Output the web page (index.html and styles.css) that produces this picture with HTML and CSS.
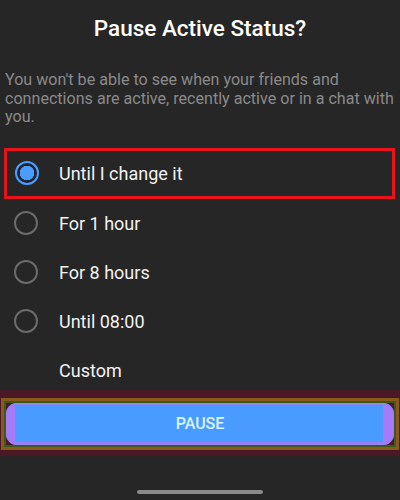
FILE: index.html
```html
<!DOCTYPE html>
<html lang="en">
<head>
    <meta charset="UTF-8">
    <meta name="viewport" content="width=device-width, initial-scale=1.0">
    <title>Pause Active Status?</title>
    <link rel="stylesheet" href="styles.css">
</head>
<body>
    <div class="sheet">
        <h1 class="title">Pause Active Status?</h1>
        <p class="desc">You won't be able to see when your friends and connections are active, recently active or in a chat with you.</p>
        <div class="options">
            <div class="option selected highlight">
                <span class="radio"></span>
                <span class="label">Until I change it</span>
            </div>
            <div class="option">
                <span class="radio"></span>
                <span class="label">For 1 hour</span>
            </div>
            <div class="option">
                <span class="radio"></span>
                <span class="label">For 8 hours</span>
            </div>
            <div class="option">
                <span class="radio"></span>
                <span class="label">Until 08:00</span>
            </div>
            <div class="option last">
                <span class="radio none"></span>
                <span class="label">Custom</span>
            </div>
        </div>
        <div class="action-band">
            <div class="outline-orange">
                <div class="outline-green">
                    <button class="pause-button">PAUSE</button>
                </div>
            </div>
        </div>
        <div class="home-area">
            <div class="home-bar"></div>
        </div>
    </div>
</body>
</html>
```

FILE: styles.css
```css
body {
    font-family: Roboto, "Liberation Sans", sans-serif;
    margin: 0;
    padding: 0;
    background-color: #262626;
}
.sheet {
    width: 400px;
    height: 500px;
    display: flex;
    flex-direction: column;
    overflow: hidden;
}
.title {
    margin: 0;
    padding-top: 14px;
    font-size: 22.5px;
    font-weight: 500;
    line-height: 28px;
    color: #fff;
    text-align: center;
}
.desc {
    margin: 29px 0 0;
    padding: 0 5px;
    font-size: 16.1px;
    line-height: 18.5px;
    color: #8a8a8a;
}
.options {
    margin: 21px 4px 0;
    display: flex;
    flex-direction: column;
}
.option {
    height: 49px;
    display: flex;
    align-items: center;
    box-sizing: border-box;
}
.option.highlight {
    height: 51px;
    border: 3px solid #e8121c;
    margin: 0 1px 0 0;
}
.option.last {
    height: 44px;
    align-items: flex-start;
    padding-top: 14px;
}
.option.highlight .radio {
    margin-left: 8px;
}
.radio {
    width: 24px;
    height: 24px;
    box-sizing: border-box;
    border: 2px solid #6b6b6b;
    border-radius: 50%;
    margin-left: 10px;
    flex-shrink: 0;
}
.radio.none {
    border-color: transparent;
}
.selected .radio {
    border-color: #4a9dff;
    background: radial-gradient(circle, #4a9dff 0 7px, #1f2530 7.5px);
}
.label {
    margin-left: 21px;
    font-size: 18px;
    color: #f2f2f2;
}
.option.highlight .label {
    margin-left: 20px;
}
.action-band {
    background-color: #4a1925;
    padding: 8px 1px 6px;
}
.outline-orange {
    border: 3px solid #8a5a1c;
}
.outline-green {
    border: 2px solid #3b5a1d;
}
.pause-button {
    display: block;
    width: 100%;
    height: 42px;
    border: none;
    border-radius: 11px;
    background: linear-gradient(to right, #a67af8 0 9px, #4a9bff 9px calc(100% - 11px), #a67af8 calc(100% - 11px));
    box-shadow: inset 0 2px 0 #8f86f5, inset 0 -3px 0 #9b7ff4;
    color: #d9f3ff;
    font-family: Roboto, "Liberation Sans", sans-serif;
    font-size: 16px;
    font-weight: 500;
    cursor: pointer;
}
.home-area {
    flex: 1;
    display: flex;
    justify-content: center;
    align-items: flex-end;
    padding-bottom: 6px;
}
.home-bar {
    width: 126px;
    height: 4px;
    border-radius: 2px;
    background-color: #8a8a8a;
}
```
